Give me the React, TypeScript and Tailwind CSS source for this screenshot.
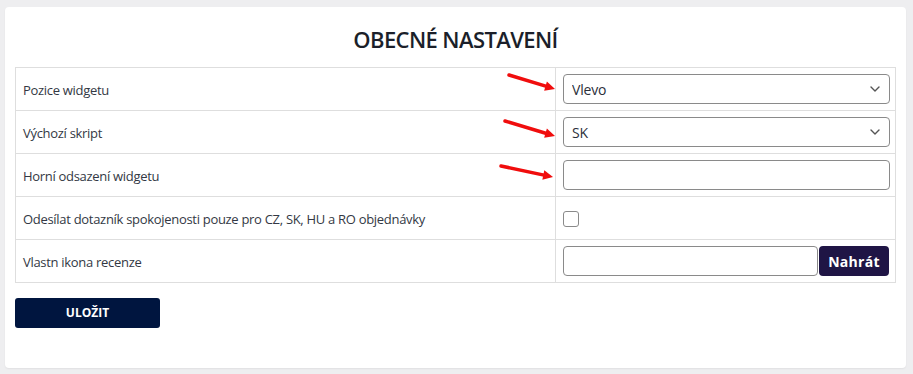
import React from "react";

const Arrow: React.FC<{ x1: number; y1: number; x2: number; y2: number }> = ({ x1, y1, x2, y2 }) => {
	const angle = Math.atan2(y2 - y1, x2 - x1);
	const len = 11;
	const spread = 0.45;
	const ax = x2 - len * Math.cos(angle - spread);
	const ay = y2 - len * Math.sin(angle - spread);
	const bx = x2 - len * Math.cos(angle + spread);
	const by = y2 - len * Math.sin(angle + spread);
	const mx = x2 - 8 * Math.cos(angle);
	const my = y2 - 8 * Math.sin(angle);
	return (
		<g>
			<line x1={x1} y1={y1} x2={mx} y2={my} stroke="#f00d0d" strokeWidth={3.5} strokeLinecap="round" />
			<polygon points={`${x2},${y2} ${ax},${ay} ${bx},${by}`} fill="#f00d0d" />
		</g>
	);
};

const Chevron: React.FC = () => (
	<svg
		className="pointer-events-none absolute right-[10px] top-1/2 -translate-y-1/2"
		width="10"
		height="6"
		viewBox="0 0 10 6"
		fill="none"
	>
		<path d="M1 1l4 4 4-4" stroke="#555" strokeWidth="1.4" strokeLinecap="round" strokeLinejoin="round" />
	</svg>
);

const SelectBox: React.FC<{ value: string }> = ({ value }) => (
	<div className="relative w-full">
		<select
			defaultValue={value}
			className="h-[30px] w-full appearance-none rounded-[4px] border border-[#8a8a8a] bg-white pl-[8px] text-[14px] tracking-[-0.2px] text-[#2b2f3a] outline-none"
		>
			<option>{value}</option>
		</select>
		<Chevron />
	</div>
);

const rows = [
	"Pozice widgetu",
	"Výchozí skript",
	"Horní odsazení widgetu",
	"Odesílat dotazník spokojenosti pouze pro CZ, SK, HU a RO objednávky",
	"Vlastn ikona recenze",
];

const App: React.FC = () => {
	const renderControl = (index: number) => {
		switch (index) {
			case 0:
				return <SelectBox value="Vlevo" />;
			case 1:
				return <SelectBox value="SK" />;
			case 2:
				return (
					<input
						type="text"
						className="h-[30px] w-full rounded-[4px] border border-[#8a8a8a] bg-white px-2 outline-none"
					/>
				);
			case 3:
				return (
					<input
						type="checkbox"
						className="mt-[2px] block h-[16px] w-[16px] appearance-none rounded-[3px] border border-[#8a8a8a] bg-white"
					/>
				);
			default:
				return (
					<div className="flex items-center gap-[1px]">
						<input
							type="text"
							className="h-[30px] w-[255px] rounded-[4px] border border-[#8a8a8a] bg-white px-2 outline-none"
						/>
						<button className="h-[30px] w-[70px] rounded-[4px] bg-[#1f1545] text-[14px] font-bold tracking-[0.3px] text-white">
							Nahrát
						</button>
					</div>
				);
		}
	};

	return (
		<div
			className="h-[374px] w-[913px] bg-[#eeeef0] pl-[5px] pr-[7px] pt-[7px]"
			style={{ fontFamily: '"Open Sans", sans-serif' }}
		>
			<div className="relative h-[361px] w-[901px] rounded-[4px] bg-white px-[10px] shadow-[0_1px_2px_rgba(0,0,0,0.06)]">
				<h1 className="pb-[14px] pt-[18px] text-center text-[22px] font-semibold leading-[28px] tracking-[-0.6px] text-[#1b1f2a]">
					OBECNÉ NASTAVENÍ
				</h1>

				<table className="w-[881px] border-collapse border border-[#dedede] text-[13px] tracking-[-0.3px] text-[#333844]">
					<tbody>
						{rows.map((label, i) => (
							<tr key={label} className="h-[43px] border-b border-[#dedede]">
								<td className="w-[540px] border-r border-[#dedede] pl-[7px] pt-[3px] align-middle">{label}</td>
								<td className="pl-[7px] pr-[5px] align-middle">{renderControl(i)}</td>
							</tr>
						))}
					</tbody>
				</table>

				<button className="mt-[15px] h-[30px] w-[145px] rounded-[3px] bg-[#00153f] text-[12px] font-bold text-white">
					ULOŽIT
				</button>

				<svg className="pointer-events-none absolute left-[-5px] top-[-7px]" width="913" height="374">
					<Arrow x1={509} y1={75} x2={555} y2={89} />
					<Arrow x1={505} y1={121} x2={555} y2={136} />
					<Arrow x1={501} y1={166} x2={553} y2={177} />
				</svg>
			</div>
		</div>
	);
};

export default App;
